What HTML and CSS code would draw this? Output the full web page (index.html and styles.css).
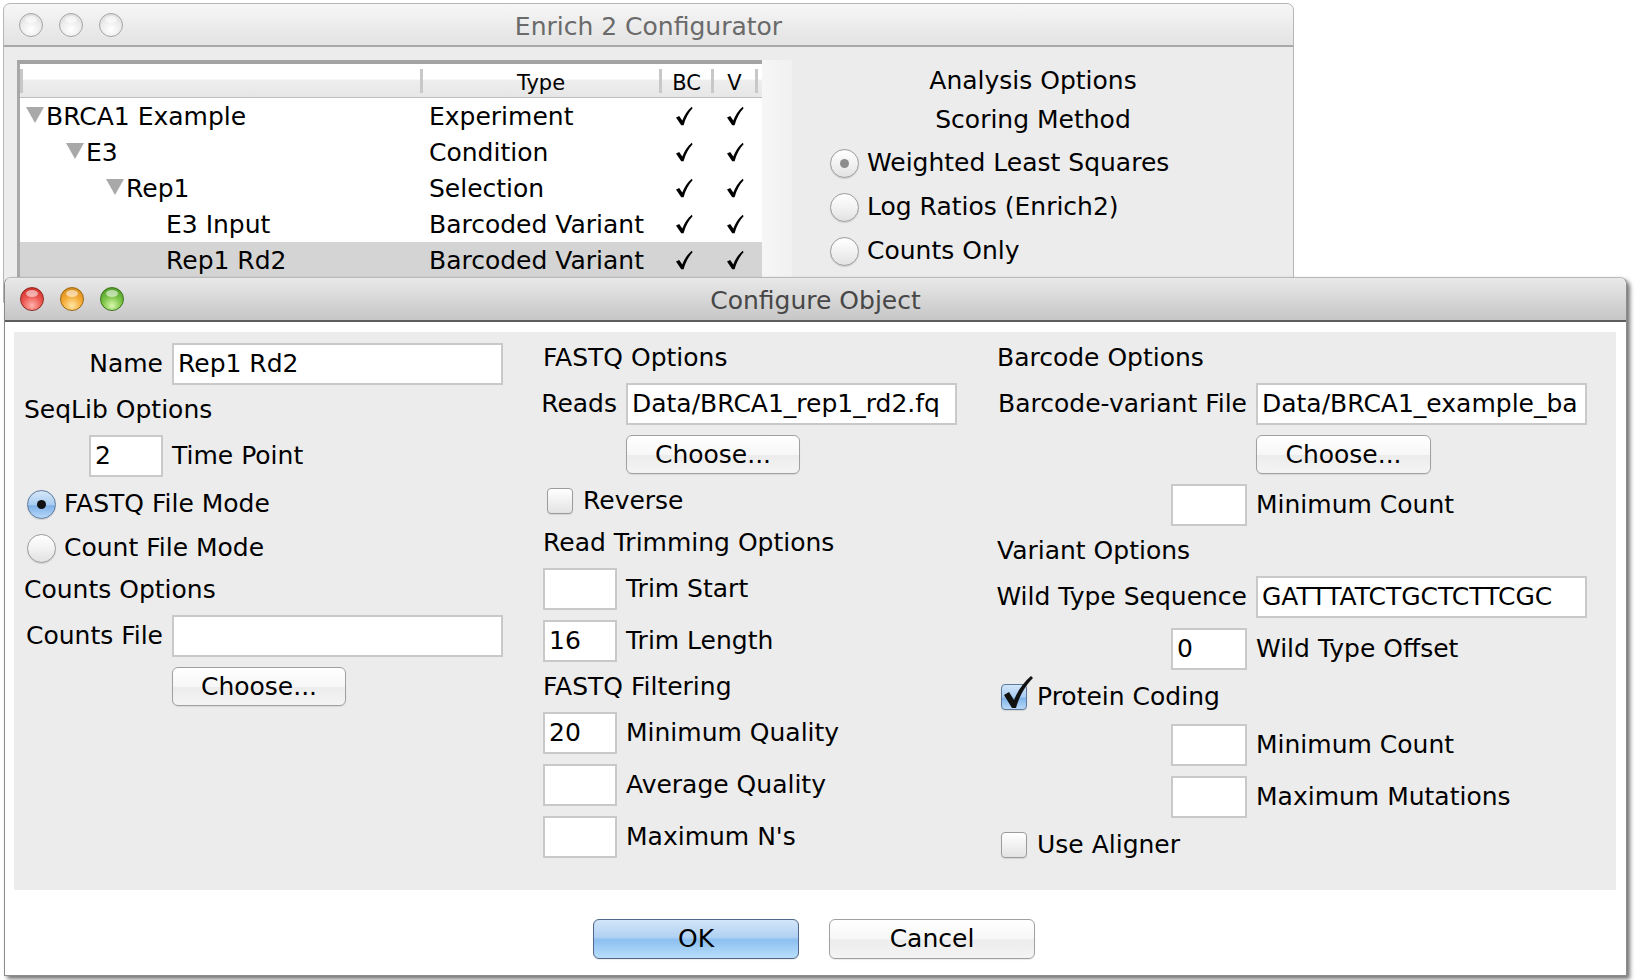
FILE: index.html
```html
<!DOCTYPE html>
<html>
<head>
<meta charset="utf-8">
<title>Enrich 2 Configurator</title>
<link rel="stylesheet" href="styles.css">
</head>
<body>
<div class="win back">
  <div class="titlebar">
    <div class="lights"><span class="light off"></span><span class="light off"></span><span class="light off"></span></div>
    <div class="title">Enrich 2 Configurator</div>
    <div></div>
  </div>
  <div class="back-body">
    <div class="tree">
      <div class="tree-head">
        <div class="th th-name"></div>
        <div class="th th-type">Type</div>
        <div class="th th-bc">BC</div>
        <div class="th th-v">V</div>
      </div>
      <div class="tr">
        <div class="td td-name lvl0"><span class="tri"></span>BRCA1 Example</div>
        <div class="td td-type">Experiment</div>
        <div class="td td-bc"><svg class="ck" width="18" height="20" viewBox="0 0 18 20"><path d="M1 11.5 L4.2 10 L7.3 14.6 C9.5 8.8 12.6 4 16.8 0.8 L17.6 2.2 C13.8 6.2 10.6 12 8.6 19.2 L6.2 19.2 Z" fill="#000"/></svg></div>
        <div class="td td-v"><svg class="ck" width="18" height="20" viewBox="0 0 18 20"><path d="M1 11.5 L4.2 10 L7.3 14.6 C9.5 8.8 12.6 4 16.8 0.8 L17.6 2.2 C13.8 6.2 10.6 12 8.6 19.2 L6.2 19.2 Z" fill="#000"/></svg></div>
      </div>
      <div class="tr">
        <div class="td td-name lvl1"><span class="tri"></span>E3</div>
        <div class="td td-type">Condition</div>
        <div class="td td-bc"><svg class="ck" width="18" height="20" viewBox="0 0 18 20"><path d="M1 11.5 L4.2 10 L7.3 14.6 C9.5 8.8 12.6 4 16.8 0.8 L17.6 2.2 C13.8 6.2 10.6 12 8.6 19.2 L6.2 19.2 Z" fill="#000"/></svg></div>
        <div class="td td-v"><svg class="ck" width="18" height="20" viewBox="0 0 18 20"><path d="M1 11.5 L4.2 10 L7.3 14.6 C9.5 8.8 12.6 4 16.8 0.8 L17.6 2.2 C13.8 6.2 10.6 12 8.6 19.2 L6.2 19.2 Z" fill="#000"/></svg></div>
      </div>
      <div class="tr">
        <div class="td td-name lvl2"><span class="tri"></span>Rep1</div>
        <div class="td td-type">Selection</div>
        <div class="td td-bc"><svg class="ck" width="18" height="20" viewBox="0 0 18 20"><path d="M1 11.5 L4.2 10 L7.3 14.6 C9.5 8.8 12.6 4 16.8 0.8 L17.6 2.2 C13.8 6.2 10.6 12 8.6 19.2 L6.2 19.2 Z" fill="#000"/></svg></div>
        <div class="td td-v"><svg class="ck" width="18" height="20" viewBox="0 0 18 20"><path d="M1 11.5 L4.2 10 L7.3 14.6 C9.5 8.8 12.6 4 16.8 0.8 L17.6 2.2 C13.8 6.2 10.6 12 8.6 19.2 L6.2 19.2 Z" fill="#000"/></svg></div>
      </div>
      <div class="tr">
        <div class="td td-name lvl3"><span class="tri none"></span>E3 Input</div>
        <div class="td td-type">Barcoded Variant</div>
        <div class="td td-bc"><svg class="ck" width="18" height="20" viewBox="0 0 18 20"><path d="M1 11.5 L4.2 10 L7.3 14.6 C9.5 8.8 12.6 4 16.8 0.8 L17.6 2.2 C13.8 6.2 10.6 12 8.6 19.2 L6.2 19.2 Z" fill="#000"/></svg></div>
        <div class="td td-v"><svg class="ck" width="18" height="20" viewBox="0 0 18 20"><path d="M1 11.5 L4.2 10 L7.3 14.6 C9.5 8.8 12.6 4 16.8 0.8 L17.6 2.2 C13.8 6.2 10.6 12 8.6 19.2 L6.2 19.2 Z" fill="#000"/></svg></div>
      </div>
      <div class="tr selected">
        <div class="td td-name lvl3"><span class="tri none"></span>Rep1 Rd2</div>
        <div class="td td-type">Barcoded Variant</div>
        <div class="td td-bc"><svg class="ck" width="18" height="20" viewBox="0 0 18 20"><path d="M1 11.5 L4.2 10 L7.3 14.6 C9.5 8.8 12.6 4 16.8 0.8 L17.6 2.2 C13.8 6.2 10.6 12 8.6 19.2 L6.2 19.2 Z" fill="#000"/></svg></div>
        <div class="td td-v"><svg class="ck" width="18" height="20" viewBox="0 0 18 20"><path d="M1 11.5 L4.2 10 L7.3 14.6 C9.5 8.8 12.6 4 16.8 0.8 L17.6 2.2 C13.8 6.2 10.6 12 8.6 19.2 L6.2 19.2 Z" fill="#000"/></svg></div>
      </div>
    </div>
    <div class="vscroll"></div>
    <div class="analysis">
      <div class="an-head">Analysis Options</div>
      <div class="an-head an-sub">Scoring Method</div>
      <div class="opt"><span class="radio dim-on"></span>Weighted Least Squares</div>
      <div class="opt"><span class="radio"></span>Log Ratios (Enrich2)</div>
      <div class="opt"><span class="radio"></span>Counts Only</div>
    </div>
  </div>
</div>

<div class="win front">
  <div class="titlebar">
    <div class="lights"><span class="light red"></span><span class="light yellow"></span><span class="light green"></span></div>
    <div class="title">Configure Object</div>
    <div></div>
  </div>
  <div class="front-body">
    <div class="panel">
      <div class="col col1">
        <div class="lbl">Name</div>
        <div class="field">Rep1 Rd2</div>
        <div class="head">SeqLib Options</div>
        <div class="field small">2</div>
        <div class="txt">Time Point</div>
        <div class="check-row"><span class="radio on"></span>FASTQ File Mode</div>
        <div class="check-row"><span class="radio"></span>Count File Mode</div>
        <div class="head">Counts Options</div>
        <div class="lbl">Counts File</div>
        <div class="field"></div>
        <div class="btn choose">Choose...</div>
      </div>
      <div class="col col2">
        <div class="head">FASTQ Options</div>
        <div class="lbl">Reads</div>
        <div class="field">Data/BRCA1_rep1_rd2.fq</div>
        <div class="btn choose">Choose...</div>
        <div class="check-row cb"><span class="checkbox"></span>Reverse</div>
        <div class="head">Read Trimming Options</div>
        <div class="field small"></div>
        <div class="txt">Trim Start</div>
        <div class="field small">16</div>
        <div class="txt">Trim Length</div>
        <div class="head">FASTQ Filtering</div>
        <div class="field small">20</div>
        <div class="txt">Minimum Quality</div>
        <div class="field small"></div>
        <div class="txt">Average Quality</div>
        <div class="field small"></div>
        <div class="txt">Maximum N's</div>
      </div>
      <div class="col col3">
        <div class="head">Barcode Options</div>
        <div class="lbl">Barcode-variant File</div>
        <div class="field">Data/BRCA1_example_ba</div>
        <div class="btn choose">Choose...</div>
        <div class="field small">&nbsp;</div>
        <div class="txt">Minimum Count</div>
        <div class="head">Variant Options</div>
        <div class="lbl">Wild Type Sequence</div>
        <div class="field">GATTTATCTGCTCTTCGC</div>
        <div class="field small">0</div>
        <div class="txt">Wild Type Offset</div>
        <div class="check-row cb"><span class="checkbox on"><svg class="tick" width="34" height="36" viewBox="0 0 34 36"><path d="M4 20 L9 17 L14 25 C18 15 24 7 31 1 L33 3 C26 10 20 19 16 33 L12 33 Z" fill="#111"/></svg></span>Protein Coding</div>
        <div class="field small"></div>
        <div class="txt">Minimum Count</div>
        <div class="field small"></div>
        <div class="txt">Maximum Mutations</div>
        <div class="check-row cb"><span class="checkbox"></span>Use Aligner</div>
      </div>
    </div>
    <div class="buttons">
      <div class="btn dlg ok">OK</div>
      <div class="btn dlg">Cancel</div>
    </div>
  </div>
</div>
</body>
</html>
```

FILE: styles.css
```css
* { box-sizing: border-box; }
html, body { margin: 0; padding: 0; }
body {
  width: 1640px;
  height: 980px;
  background: #ffffff;
  position: relative;
  overflow: hidden;
  font-family: "DejaVu Sans", "Liberation Sans", sans-serif;
  font-size: 25px;
  line-height: 30px;
  color: #000;
}

.win { position: absolute; }

/* ---------- title bars ---------- */
.titlebar {
  display: grid;
  grid-template-columns: 1fr auto 1fr;
  align-items: center;
  border-radius: 7px 7px 0 0;
}
.lights { display: flex; gap: 16px; padding-left: 15px; }
.light {
  width: 24px;
  height: 24px;
  border-radius: 50%;
  display: block;
  position: relative;
}
.light.off {
  background: radial-gradient(circle at 50% 70%, #ffffff 0, #eeeeee 45%, #d6d6d6 100%);
  border: 1px solid #a4a4a4;
}
.light.red {
  background: radial-gradient(circle at 50% 80%, #ffb3ad 0, #ec5a52 45%, #c42019 100%);
  border: 1px solid #8e2a24;
}
.light.yellow {
  background: radial-gradient(circle at 50% 80%, #ffe7a8 0, #f5ac38 45%, #c97f10 100%);
  border: 1px solid #9c6914;
}
.light.green {
  background: radial-gradient(circle at 50% 80%, #d8f8ae 0, #7cc446 45%, #44901f 100%);
  border: 1px solid #3a761c;
}
.light::after {
  content: "";
  position: absolute;
  left: 5px;
  top: 2px;
  width: 12px;
  height: 7px;
  border-radius: 50%;
  background: rgba(255, 255, 255, 0.55);
}

.title { font-size: 25px; }

/* ---------- back window ---------- */
.back {
  left: 3px;
  top: 3px;
  width: 1291px;
  height: 300px;
  background: #ececec;
  border: 1px solid #b6b6b6;
  border-radius: 7px 7px 0 0;
}
.back .titlebar {
  height: 43px;
  background: linear-gradient(#f6f6f6, #e3e3e3);
  border-bottom: 2px solid #a8a8a8;
}
.back .lights { margin-top: 1px; }
.back .title { color: #6a6a6a; padding-top: 5px; }

.back-body {
  display: flex;
  padding: 13px 0 0 13px;
  height: 250px;
}

.tree {
  width: 745px;
  background: #fff;
  border-top: 4px solid #a3a3a3;
  border-left: 3px solid #a8a8a8;
  flex: none;
}
.tree-head {
  display: flex;
  align-items: center;
  height: 34px;
  border-bottom: 1px solid #bdbdbd;
  background: linear-gradient(#ffffff 0, #ffffff 45%, #eeeeee 50%, #e6e6e6 100%);
  font-size: 21px;
}
.th {
  height: 24px;
  line-height: 24px;
  padding-top: 2px;
  text-align: center;
  border-left: 3px solid #c8c8c8;
}
.th-name { width: 400px; }
.th-type { width: 239px; }
.th-bc { width: 52px; }
.th-v { width: 47px; border-right: 3px solid #c8c8c8; }

.tr {
  display: flex;
  align-items: center;
  height: 36px;
  padding-top: 2px;
}
.tr.selected { background: #d4d4d4; }
.td { white-space: nowrap; }
.td-name { width: 400px; display: flex; align-items: center; }
.lvl0 { padding-left: 6px; }
.lvl1 { padding-left: 46px; }
.lvl2 { padding-left: 86px; }
.lvl3 { padding-left: 126px; }
.tri {
  width: 0;
  height: 0;
  border-left: 9px solid transparent;
  border-right: 9px solid transparent;
  border-top: 16px solid #a9a9a9;
  margin-right: 2px;
  margin-top: -4px;
}
.tri.none { border-top-color: transparent; }
.td-type { width: 239px; padding-left: 9px; }
.td-bc, .td-v {
  display: flex;
  justify-content: center;
  align-items: center;
  margin-top: -3px;
}
.td-bc { width: 52px; padding-right: 2px; }
.td-v { width: 47px; }
.ck { display: block; }

.vscroll {
  width: 30px;
  flex: none;
  background: linear-gradient(to right, #f6f6f6, #f1f1f1);
}

.analysis {
  width: 482px;
  flex: none;
  padding-top: 6px;
  display: flex;
  flex-direction: column;
}
.an-head { text-align: center; height: 30px; }
.an-sub { margin-top: 9px; margin-bottom: 1px; }
.opt {
  display: flex;
  align-items: center;
  height: 34px;
  margin-top: 10px;
  padding-left: 38px;
}
.opt .radio { margin-right: 8px; }

/* ---------- controls ---------- */
.radio {
  width: 29px;
  height: 29px;
  border-radius: 50%;
  flex: none;
  border: 1px solid #9a9a9a;
  background: linear-gradient(#ffffff, #f2f2f2 50%, #e2e2e2 100%);
  box-shadow: 0 1px 1px rgba(0,0,0,0.12);
  display: flex;
  align-items: center;
  justify-content: center;
}
.radio.dim-on::after {
  content: "";
  width: 9px;
  height: 9px;
  border-radius: 50%;
  background: #8c8c8c;
}
.radio.on {
  border: 1px solid #5d7899;
  background: linear-gradient(#d7e8fa, #a9ccf1 50%, #7fb1e8 55%, #b7d8f8 100%);
}
.radio.on::after {
  content: "";
  width: 9px;
  height: 9px;
  border-radius: 50%;
  background: #111;
}

.checkbox {
  width: 26px;
  height: 26px;
  flex: none;
  border-radius: 4px;
  border: 1px solid #9c9c9c;
  background: linear-gradient(#ffffff, #f1f1f1 50%, #e3e3e3 100%);
  box-shadow: 0 1px 1px rgba(0,0,0,0.1);
  position: relative;
}
.checkbox.on {
  border: 1px solid #5d7899;
  background: linear-gradient(#d3e6fa, #a8cbf1 50%, #80b3e9 55%, #b8d9f8 100%);
}
.tick {
  position: absolute;
  left: -2px;
  top: -10px;
}

/* ---------- front window ---------- */
.front {
  left: 4px;
  top: 277px;
  width: 1623px;
  height: 699px;
  background: #ffffff;
  border: 1px solid #8c8c8c;
  border-top-color: #b8b8b8;
  border-radius: 7px 7px 0 0;
  box-shadow: 3px 3px 4px rgba(0, 0, 0, 0.55);
}
.front .titlebar {
  height: 44px;
  background: linear-gradient(#e9e9e9, #d4d4d4 60%, #c6c6c6);
  border-bottom: 2px solid #5e5e5e;
}
.front .title { color: #474747; padding-top: 4px; }

.front-body {
  display: flex;
  flex-direction: column;
}

.panel {
  margin: 10px 10px 0 9px;
  height: 558px;
  background: #ececec;
  padding: 11px 0 0 10px;
  display: flex;
  align-items: flex-start;
  gap: 40px;
}

.col {
  display: grid;
  column-gap: 9px;
  row-gap: 10px;
  align-items: center;
}
.col1 { grid-template-columns: 139px 331px; }
.col2 { grid-template-columns: 74px 331px; }
.col3 { grid-template-columns: 250px 331px; }

.head { grid-column: 1 / -1; height: 30px; white-space: nowrap; }
.lbl { justify-self: end; white-space: nowrap; }
.txt { white-space: nowrap; }

.field {
  height: 42px;
  background: #ffffff;
  border: 2px solid #c9c9c9;
  padding: 0 4px;
  line-height: 38px;
  white-space: nowrap;
  overflow: hidden;
}
.field.small { width: 74px; justify-self: end; grid-column: 1; }
.col3 .field.small { width: 76px; }

.check-row {
  grid-column: 1 / -1;
  display: flex;
  align-items: center;
  height: 34px;
  padding-left: 3px;
  white-space: nowrap;
}
.check-row .radio { margin-right: 8px; }
.check-row.cb { padding-left: 4px; }
.check-row .checkbox { margin-right: 10px; }

.btn {
  height: 39px;
  border: 1px solid #a0a0a0;
  border-radius: 6px;
  background: linear-gradient(#ffffff, #f7f7f7 50%, #ececec 52%, #f4f4f4 100%);
  box-shadow: 0 1px 1px rgba(0,0,0,0.08);
  display: flex;
  align-items: center;
  justify-content: center;
  white-space: nowrap;
}
.choose { grid-column: 2; width: 174px; justify-self: start; }
.col3 .choose { width: 175px; }

.buttons {
  display: flex;
  justify-content: center;
  gap: 30px;
  margin-top: 29px;
  padding-right: 3px;
}
.btn.dlg { width: 206px; height: 40px; }
.btn.ok {
  border: 1px solid #51668a;
  background: linear-gradient(#d2e5f9, #b1d2f3 45%, #8cc0f0 52%, #b9defb 100%);
}
```
